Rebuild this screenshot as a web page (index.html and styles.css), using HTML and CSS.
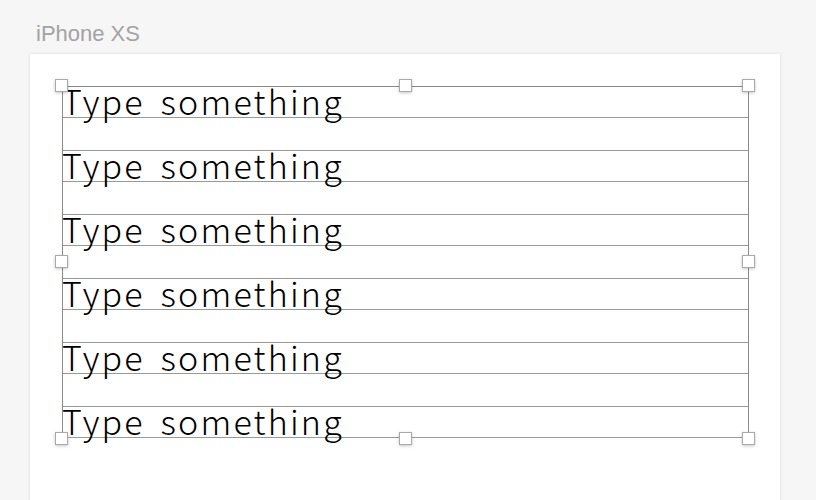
FILE: index.html
```html
<!DOCTYPE html>
<html>
<head>
<meta charset="utf-8">
<link rel="stylesheet" href="styles.css">
</head>
<body>
<div class="canvas">
  <div class="label">iPhone XS</div>
  <div class="artboard">
    <div class="selection">
      <div class="row"><span class="text">Type something</span></div>
      <div class="row"><span class="text">Type something</span></div>
      <div class="row"><span class="text">Type something</span></div>
      <div class="row"><span class="text">Type something</span></div>
      <div class="row"><span class="text">Type something</span></div>
      <div class="row"><span class="text">Type something</span></div>
      <span class="handle h-tl"></span>
      <span class="handle h-tc"></span>
      <span class="handle h-tr"></span>
      <span class="handle h-ml"></span>
      <span class="handle h-mr"></span>
      <span class="handle h-bl"></span>
      <span class="handle h-bc"></span>
      <span class="handle h-br"></span>
    </div>
  </div>
</div>
</body>
</html>
```
FILE: styles.css
```css
html, body {
  margin: 0;
  padding: 0;
  background: #f6f6f6;
  overflow: hidden;
}
.canvas {
  width: 816px;
  height: 500px;
  padding: 0 0 0 30px;
  box-sizing: border-box;
}
.label {
  font-family: "Liberation Sans", Arial, sans-serif;
  font-size: 22px;
  color: #a3a3a3;
  height: 54px;
  padding: 22px 0 0 6px;
  line-height: 24px;
  box-sizing: border-box;
}
.artboard {
  width: 750px;
  height: 460px;
  background: #ffffff;
  box-shadow: 0 0 3px rgba(0,0,0,0.12);
  padding: 32px 0 0 32px;
  box-sizing: border-box;
}
.selection {
  position: relative;
  width: 687px;
  box-sizing: border-box;
  border-left: 1px solid #8c8c8c;
  border-right: 1px solid #8c8c8c;
  display: flex;
  flex-direction: column;
  gap: 32px;
}
.row {
  height: 32px;
  box-sizing: border-box;
  border-top: 1px solid #999;
  border-bottom: 1px solid #999;
  position: relative;
}
.row:first-child { border-top-color: #888; }
.text {
  display: block;
  font-family: "Noto Sans CJK JP", "Noto Sans", sans-serif;
  font-weight: 300;
  font-size: 34px;
  letter-spacing: 2.2px;
  word-spacing: 6px;
  color: #000;
  line-height: 30px;
  margin-left: -1px;
  white-space: nowrap;
  margin-top: -1px;
}
.handle {
  position: absolute;
  width: 13px;
  height: 13px;
  box-sizing: border-box;
  background: #fff;
  border: 1px solid #aaa;
  box-shadow: 0 1px 3px rgba(0,0,0,0.22);
  z-index: 2;
}
.h-tl { left: -8px; top: -7px; }
.h-tc { left: 336px; top: -7px; }
.h-tr { right: -7px; top: -7px; }
.h-ml { left: -8px; top: 169px; }
.h-mr { right: -7px; top: 169px; }
.h-bl { left: -8px; bottom: -7px; }
.h-bc { left: 336px; bottom: -7px; }
.h-br { right: -7px; bottom: -7px; }
```
